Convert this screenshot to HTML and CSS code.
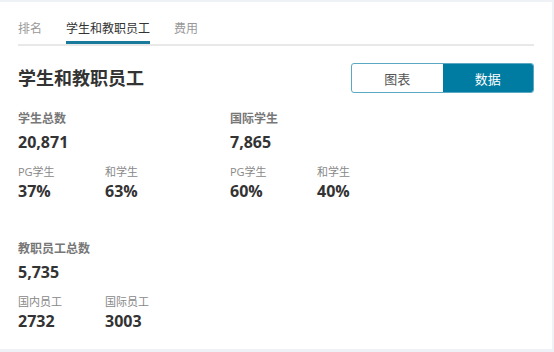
FILE: index.html
```html
<!DOCTYPE html>
<html lang="zh">
<head>
<meta charset="utf-8">
<link rel="stylesheet" href="styles.css">
</head>
<body>
<div class="card">
  <div class="tabs">
    <div class="tab">排名</div>
    <div class="tab active">学生和教职员工</div>
    <div class="tab">费用</div>
  </div>
  <div class="head">
    <h2 class="title">学生和教职员工</h2>
    <div class="toggle">
      <div class="tbtn">图表</div>
      <div class="tbtn on">数据</div>
    </div>
  </div>
  <div class="grid">
    <div class="group">
      <div class="label">学生总数</div>
      <div class="num">20,871</div>
      <div class="subs">
        <div class="sub"><div class="slabel">PG学生</div><div class="num">37%</div></div>
        <div class="sub"><div class="slabel">和学生</div><div class="num">63%</div></div>
      </div>
    </div>
    <div class="group">
      <div class="label">国际学生</div>
      <div class="num">7,865</div>
      <div class="subs">
        <div class="sub"><div class="slabel">PG学生</div><div class="num">60%</div></div>
        <div class="sub"><div class="slabel">和学生</div><div class="num">40%</div></div>
      </div>
    </div>
    <div class="group staff">
      <div class="label">教职员工总数</div>
      <div class="num">5,735</div>
      <div class="subs">
        <div class="sub"><div class="slabel">国内员工</div><div class="num">2732</div></div>
        <div class="sub"><div class="slabel">国际员工</div><div class="num">3003</div></div>
      </div>
    </div>
  </div>
</div>
</body>
</html>
```
FILE: styles.css
```css
html, body {
  margin: 0;
  padding: 0;
}
body {
  background: #eef2f6;
  width: 554px;
  height: 352px;
  font-family: "Open Sans", "Noto Sans CJK SC", sans-serif;
  color: #333;
}
.card {
  margin-top: 2px;
  width: 552px;
  height: 347px;
  background: #fff;
  box-sizing: border-box;
  padding: 0 18px;
}
.tabs {
  display: flex;
  gap: 24px;
  padding-top: 18px;
  border-bottom: 2px solid #e8e8e8;
  height: 24px;
}
.tab {
  font-size: 12px;
  line-height: 18px;
  color: #999;
  height: 24px;
  box-sizing: border-box;
}
.tab.active {
  color: #333;
  border-bottom: 3px solid #1a7a9c;
}
.head {
  display: flex;
  justify-content: space-between;
  align-items: flex-start;
  margin-top: 17px;
}
.title {
  margin: 0;
  font-size: 18px;
  font-weight: 700;
  line-height: 26px;
  margin-top: 2px;
  color: #333;
}
.toggle {
  display: flex;
  width: 183px;
  height: 30px;
  border: 1px solid #5aa8c2;
  border-radius: 3px;
  box-sizing: border-box;
  overflow: hidden;
}
.tbtn {
  flex: 1;
  display: flex;
  align-items: center;
  justify-content: center;
  font-size: 13px;
  color: #555;
}
.tbtn.on {
  background: #007ca2;
  color: #fff;
}
.grid {
  display: grid;
  grid-template-columns: 212px 212px;
  row-gap: 40px;
  margin-top: 18px;
}
.label {
  font-size: 12px;
  font-weight: 700;
  color: #777;
  line-height: 16px;
}
.num {
  font-size: 16px;
  font-weight: 700;
  color: #333;
  line-height: 20px;
  margin-top: 5px;
}
.subs {
  display: flex;
  margin-top: 13px;
}
.sub {
  width: 87px;
}
.slabel {
  font-size: 11px;
  color: #888;
  line-height: 14px;
}
.sub .num {
  margin-top: 2px;
}
```
